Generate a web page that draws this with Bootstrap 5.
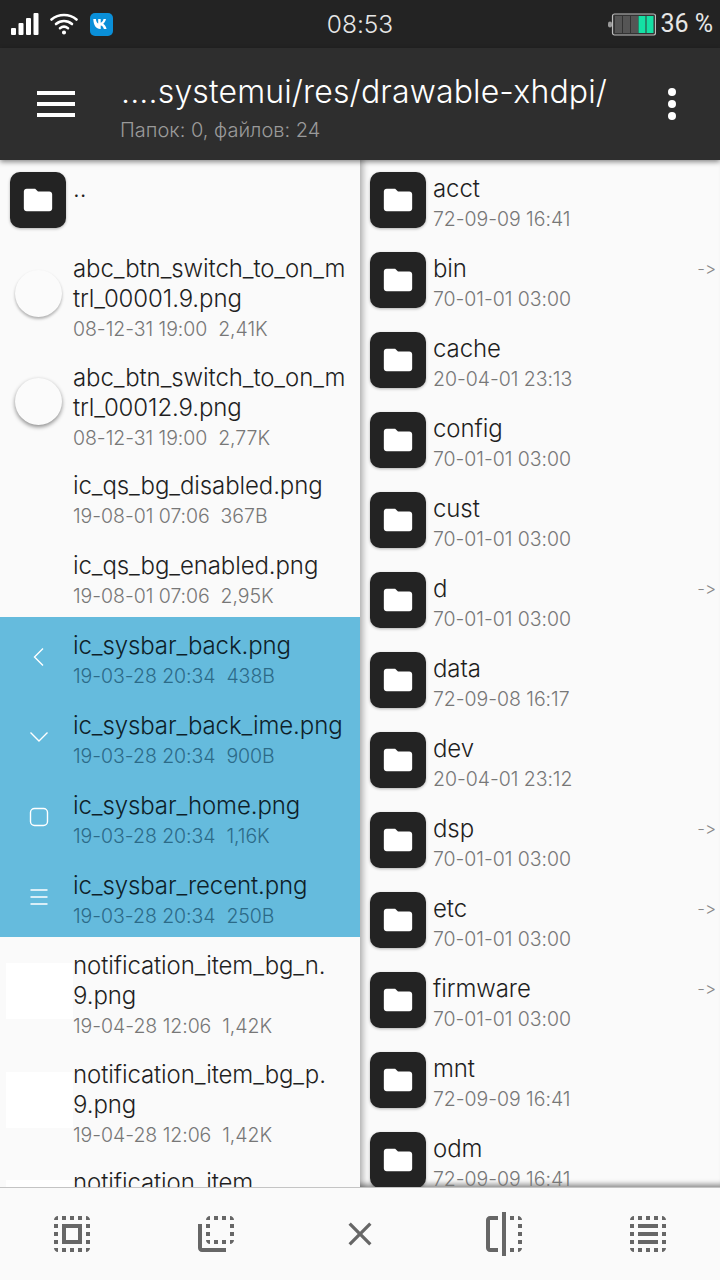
<!DOCTYPE html>
<html lang="ru">
<head>
<meta charset="UTF-8" />
<meta name="viewport" content="width=device-width, initial-scale=1.0" />
<title>Файловый менеджер</title>
<link href="https://cdn.jsdelivr.net/npm/bootstrap@5.3.0/dist/css/bootstrap.min.css" rel="stylesheet" />
<style>
html, body { height: 1280px; overflow: hidden; }
body { font-family: Inter, "Liberation Sans", sans-serif; background: #fafafa; font-variant-ligatures: none; font-feature-settings: "calt" 0, "liga" 0; }
.fm-screen { height: 1280px; }

.fm-status { height: 48px; background: #232323; color: #e6e6e6; padding: 0 7px 0 11px; flex: none; }
.fm-status-side { width: 250px; }
.fm-clock { font-size: 24.5px; line-height: 52px; font-weight: 300; margin-left: -4px; }
.fm-percent { font-family: Roboto, "Liberation Sans", sans-serif; font-size: 25px; line-height: 50px; font-weight: 400; margin-left: 4px; white-space: nowrap; }
.fm-wifi { margin-left: 11px; }
.fm-vk { width: 23px; height: 23px; background: #0a8fd8; border-radius: 5px; margin-left: 12px; }

.fm-head { height: 112px; background: #2e2e2e; color: #fff; flex: none; position: relative; z-index: 2; box-shadow: 0 2px 5px rgba(0,0,0,.45); }
.fm-burger { width: 38px; margin-left: 37px; margin-right: 46px; }
.fm-burger span { display: block; height: 4px; background: #fff; margin-bottom: 7px; }
.fm-burger span:last-child { margin-bottom: 0; }
.fm-title { font-size: 32px; line-height: 40px; font-weight: 300; letter-spacing: .15px; margin-top: 5px; white-space: nowrap; }
.fm-sub { font-size: 20px; line-height: 24px; color: #9a9a9a; font-weight: 300; margin-top: 6px; margin-left: -1px; }
.fm-dots { position: absolute; left: 668px; top: 40px; }
.fm-dots span { display: block; width: 8px; height: 8px; border-radius: 50%; background: #fff; margin-bottom: 4px; }

.fm-panes { min-height: 0; }
.fm-pane { height: 100%; overflow: hidden; background: #fafafa; }
.fm-pane-right { box-shadow: inset 8px 0 6px -5px rgba(0,0,0,.3), inset 0 -7px 5px -4px rgba(0,0,0,.4); }

.list-group-item.fm-row { background: transparent; border: 0; border-radius: 0; padding: 0; color: #1f1f1f; height: 80px; flex: none; display: flex; }
.list-group-item.fm-row.fm-two { height: 108.5px; }
.list-group-item.fm-row.active { background: #65bbdd; color: #0e1f2a; margin: 0; }
.fm-slot { width: 73px; flex: none; display: flex; align-items: center; justify-content: center; }
.fm-text { padding-top: 14px; min-width: 0; }
.fm-name { font-size: 24px; line-height: 30px; font-weight: 300; white-space: nowrap; letter-spacing: -.1px; }
.fm-meta { font-size: 19.5px; line-height: 30px; font-weight: 300; color: #777; white-space: pre; letter-spacing: -.05px; }
.active .fm-meta { color: #2c6a88; }
.fm-link { margin-left: auto; margin-top: 14px; margin-right: 4px; font-size: 17px; line-height: 30px; color: #8a8a8a; font-weight: 300; }

.fm-folder { width: 56px; height: 56px; background: #232323; border-radius: 10px; box-shadow: 0 1px 3px rgba(0,0,0,.3); display: flex; align-items: center; justify-content: center; margin-left: 3px; }
.fm-folder svg { width: 34px; height: 34px; fill: #fff; }
.fm-round { width: 47px; height: 47px; border-radius: 50%; background: #fbfbfb; box-shadow: 0 2px 3px rgba(0,0,0,.3); margin-left: 3px; margin-top: -2px; }
.fm-round-dark { box-shadow: 0 2px 4px rgba(0,0,0,.45); }
.fm-blank { width: 67px; height: 56px; background: #fff; margin-left: 6px; }
.fm-sys { width: 24px; height: 24px; fill: none; stroke: #fff; stroke-width: 1.4; margin-left: 5px; }

.fm-bar { height: 93px; flex: none; background: #fafafa; border-top: 1px solid #c4c4c4; position: relative; z-index: 2; }
.fm-tool { width: 48px; height: 48px; fill: #666; }
</style>
</head>
<body>
<svg width="0" height="0" class="position-absolute">
	<symbol id="i-folder" viewBox="0 0 24 24"><path d="M10 4H4c-1.100 0-2 .9-2 2v12c0 1.100.9 2 2 2h16c1.100 0 2-.9 2-2V8c0-1.100-.9-2-2-2h-8l-2-2z" /></symbol>
</svg>

<div class="fm-screen d-flex flex-column">
	<!-- строка состояния -->
	<div class="fm-status d-flex align-items-center justify-content-between">
		<div class="fm-status-side d-flex align-items-center">
			<svg width="28" height="22" viewBox="0 0 28 22" fill="#fff"><rect x="0" y="15" width="5" height="7" rx="1" /><rect x="7.500" y="10" width="5" height="12" rx="1" /><rect x="15" y="5" width="5" height="17" rx="1" /><rect x="22.500" y="0" width="5" height="22" rx="1" /></svg>
			<svg class="fm-wifi" width="28" height="22" viewBox="0 0 28 22" fill="none" stroke="#fff" stroke-width="2.600" stroke-linecap="round"><path d="M1.500 6.500C8.500 .5 19.500 .5 26.500 6.500" /><path d="M6 11c4.800-4 11.200-4 16 0" /><path d="M10 15.200c2.400-1.800 5.600-1.800 8 0" /><circle cx="14" cy="19.500" r="1.300" fill="#fff" stroke-width="1.500" /></svg>
			<div class="fm-vk d-flex align-items-center justify-content-center">
				<svg width="17" height="10" viewBox="0 0 17 10" fill="#fff"><path d="M.3 0h2.600c.2 2.400 1.200 4 2.300 4.500V0h2.500v3.700C8.900 3.500 10 2 10.500 0H13c-.4 2.200-1.700 3.900-2.800 4.700 1.100.6 2.700 2.200 3.400 5.300h-2.700c-.5-1.800-1.700-3.200-3.200-3.400V10h-.5C3.300 10 .5 6.500.3 0z" /></svg>
			</div>
		</div>
		<div class="fm-clock">08:53</div>
		<div class="fm-status-side d-flex align-items-center justify-content-end">
			<svg width="48" height="23" viewBox="0 0 48 23"><rect x="0" y="8.500" width="4" height="6" rx="2" fill="#999" /><rect x="4.500" y="1" width="43" height="21" rx="2" fill="#333" stroke="#bdbdbd" stroke-width="1.200" /><rect x="7" y="3" width="7" height="17" fill="#555" /><rect x="15" y="3" width="7" height="17" fill="#555" /><rect x="23" y="3" width="7" height="17" fill="#555" /><rect x="30.500" y="3" width="7" height="17" fill="#14e0a4" /><rect x="38.500" y="3" width="7" height="17" fill="#14e0a4" /></svg>
			<div class="fm-percent">36 %</div>
		</div>
	</div>

	<!-- шапка -->
	<header class="fm-head d-flex align-items-center">
		<div class="fm-burger"><span></span><span></span><span></span></div>
		<div>
			<div class="fm-title">....systemui/res/drawable-xhdpi/</div>
			<div class="fm-sub">Папок: 0, файлов: 24</div>
		</div>
		<div class="fm-dots"><span></span><span></span><span></span></div>
	</header>

	<!-- две панели -->
	<div class="fm-panes row g-0 flex-fill flex-nowrap">
		<div class="col-6 h-100">
			<div class="fm-pane list-group list-group-flush flex-nowrap">
				<div class="list-group-item fm-row"><div class="fm-slot"><div class="fm-folder"><svg><use href="#i-folder" /></svg></div></div><div class="fm-text"><div class="fm-name">..</div></div></div>
				<div class="list-group-item fm-row fm-two"><div class="fm-slot"><div class="fm-round"></div></div><div class="fm-text"><div class="fm-name">abc_btn_switch_to_on_m<br />trl_00001.9.png</div><div class="fm-meta">08-12-31 19:00  2,41K</div></div></div>
				<div class="list-group-item fm-row fm-two"><div class="fm-slot"><div class="fm-round fm-round-dark"></div></div><div class="fm-text"><div class="fm-name">abc_btn_switch_to_on_m<br />trl_00012.9.png</div><div class="fm-meta">08-12-31 19:00  2,77K</div></div></div>
				<div class="list-group-item fm-row"><div class="fm-slot"></div><div class="fm-text"><div class="fm-name">ic_qs_bg_disabled.png</div><div class="fm-meta">19-08-01 07:06  367B</div></div></div>
				<div class="list-group-item fm-row"><div class="fm-slot"></div><div class="fm-text"><div class="fm-name">ic_qs_bg_enabled.png</div><div class="fm-meta">19-08-01 07:06  2,95K</div></div></div>
				<div class="list-group-item fm-row active"><div class="fm-slot"><svg class="fm-sys" viewBox="0 0 24 24"><path d="M16 3.500 7.500 12l8.500 8.500" /></svg></div><div class="fm-text"><div class="fm-name">ic_sysbar_back.png</div><div class="fm-meta">19-03-28 20:34  438B</div></div></div>
				<div class="list-group-item fm-row active"><div class="fm-slot"><svg class="fm-sys" viewBox="0 0 24 24"><path d="M3.500 7.500 12 16l8.500-8.500" /></svg></div><div class="fm-text"><div class="fm-name">ic_sysbar_back_ime.png</div><div class="fm-meta">19-03-28 20:34  900B</div></div></div>
				<div class="list-group-item fm-row active"><div class="fm-slot"><svg class="fm-sys" viewBox="0 0 24 24"><rect x="3.500" y="3.500" width="17" height="17" rx="4" /></svg></div><div class="fm-text"><div class="fm-name">ic_sysbar_home.png</div><div class="fm-meta">19-03-28 20:34  1,16K</div></div></div>
				<div class="list-group-item fm-row active"><div class="fm-slot"><svg class="fm-sys" viewBox="0 0 24 24"><path d="M3.500 5h17M3.500 12h17M3.500 19h17" /></svg></div><div class="fm-text"><div class="fm-name">ic_sysbar_recent.png</div><div class="fm-meta">19-03-28 20:34  250B</div></div></div>
				<div class="list-group-item fm-row fm-two"><div class="fm-slot"><div class="fm-blank"></div></div><div class="fm-text"><div class="fm-name">notification_item_bg_n.<br />9.png</div><div class="fm-meta">19-04-28 12:06  1,42K</div></div></div>
				<div class="list-group-item fm-row fm-two"><div class="fm-slot"><div class="fm-blank"></div></div><div class="fm-text"><div class="fm-name">notification_item_bg_p.<br />9.png</div><div class="fm-meta">19-04-28 12:06  1,42K</div></div></div>
				<div class="list-group-item fm-row fm-two"><div class="fm-slot"><div class="fm-blank"></div></div><div class="fm-text"><div class="fm-name">notification_item</div></div></div>
			</div>
		</div>
		<div class="col-6 h-100">
			<div class="fm-pane fm-pane-right list-group list-group-flush flex-nowrap">
				<div class="list-group-item fm-row"><div class="fm-slot"><div class="fm-folder"><svg><use href="#i-folder" /></svg></div></div><div class="fm-text"><div class="fm-name">acct</div><div class="fm-meta">72-09-09 16:41</div></div></div>
				<div class="list-group-item fm-row"><div class="fm-slot"><div class="fm-folder"><svg><use href="#i-folder" /></svg></div></div><div class="fm-text"><div class="fm-name">bin</div><div class="fm-meta">70-01-01 03:00</div></div><div class="fm-link">-&gt;</div></div>
				<div class="list-group-item fm-row"><div class="fm-slot"><div class="fm-folder"><svg><use href="#i-folder" /></svg></div></div><div class="fm-text"><div class="fm-name">cache</div><div class="fm-meta">20-04-01 23:13</div></div></div>
				<div class="list-group-item fm-row"><div class="fm-slot"><div class="fm-folder"><svg><use href="#i-folder" /></svg></div></div><div class="fm-text"><div class="fm-name">config</div><div class="fm-meta">70-01-01 03:00</div></div></div>
				<div class="list-group-item fm-row"><div class="fm-slot"><div class="fm-folder"><svg><use href="#i-folder" /></svg></div></div><div class="fm-text"><div class="fm-name">cust</div><div class="fm-meta">70-01-01 03:00</div></div></div>
				<div class="list-group-item fm-row"><div class="fm-slot"><div class="fm-folder"><svg><use href="#i-folder" /></svg></div></div><div class="fm-text"><div class="fm-name">d</div><div class="fm-meta">70-01-01 03:00</div></div><div class="fm-link">-&gt;</div></div>
				<div class="list-group-item fm-row"><div class="fm-slot"><div class="fm-folder"><svg><use href="#i-folder" /></svg></div></div><div class="fm-text"><div class="fm-name">data</div><div class="fm-meta">72-09-08 16:17</div></div></div>
				<div class="list-group-item fm-row"><div class="fm-slot"><div class="fm-folder"><svg><use href="#i-folder" /></svg></div></div><div class="fm-text"><div class="fm-name">dev</div><div class="fm-meta">20-04-01 23:12</div></div></div>
				<div class="list-group-item fm-row"><div class="fm-slot"><div class="fm-folder"><svg><use href="#i-folder" /></svg></div></div><div class="fm-text"><div class="fm-name">dsp</div><div class="fm-meta">70-01-01 03:00</div></div><div class="fm-link">-&gt;</div></div>
				<div class="list-group-item fm-row"><div class="fm-slot"><div class="fm-folder"><svg><use href="#i-folder" /></svg></div></div><div class="fm-text"><div class="fm-name">etc</div><div class="fm-meta">70-01-01 03:00</div></div><div class="fm-link">-&gt;</div></div>
				<div class="list-group-item fm-row"><div class="fm-slot"><div class="fm-folder"><svg><use href="#i-folder" /></svg></div></div><div class="fm-text"><div class="fm-name">firmware</div><div class="fm-meta">70-01-01 03:00</div></div><div class="fm-link">-&gt;</div></div>
				<div class="list-group-item fm-row"><div class="fm-slot"><div class="fm-folder"><svg><use href="#i-folder" /></svg></div></div><div class="fm-text"><div class="fm-name">mnt</div><div class="fm-meta">72-09-09 16:41</div></div></div>
				<div class="list-group-item fm-row"><div class="fm-slot"><div class="fm-folder"><svg><use href="#i-folder" /></svg></div></div><div class="fm-text"><div class="fm-name">odm</div><div class="fm-meta">72-09-09 16:41</div></div></div>
			</div>
		</div>
	</div>

	<!-- нижняя панель -->
	<div class="fm-bar d-flex align-items-center">
		<div class="flex-fill w-100 text-center"><svg class="fm-tool" viewBox="0 0 24 24"><path d="M3 5h2V3c-1.100 0-2 .9-2 2zm0 8h2v-2H3v2zm4 8h2v-2H7v2zM3 9h2V7H3v2zm10-6h-2v2h2V3zm6 0v2h2c0-1.100-.9-2-2-2zM5 21v-2H3c0 1.100.9 2 2 2zm-2-4h2v-2H3v2zM9 3H7v2h2V3zm2 18h2v-2h-2v2zm8-8h2v-2h-2v2zm0 8c1.100 0 2-.9 2-2h-2v2zm0-12h2V7h-2v2zm0 8h2v-2h-2v2zm-4 4h2v-2h-2v2zm0-16h2V3h-2v2zM7 17h10V7H7v10zm2-8h6v6H9V9z" /></svg></div>
		<div class="flex-fill w-100 text-center"><svg class="fm-tool" viewBox="0 0 24 24"><path d="M9 7H7v2h2V7zm0 4H7v2h2v-2zm0-8c-1.110 0-2 .9-2 2h2V3zm4 12h-2v2h2v-2zm6-12v2h2c0-1.100-.9-2-2-2zm-6 0h-2v2h2V3zM9 17v-2H7c0 1.100.89 2 2 2zm10-4h2v-2h-2v2zm0-4h2V7h-2v2zm0 8c1.100 0 2-.9 2-2h-2v2zM5 7H3v12c0 1.100.89 2 2 2h12v-2H5V7zm10-2h2V3h-2v2zm0 12h2v-2h-2v2z" /></svg></div>
		<div class="flex-fill w-100 text-center"><svg class="fm-tool" viewBox="-2.600 -2.600 29.200 29.200"><path d="M19 6.410 17.590 5 12 10.590 6.410 5 5 6.410 10.590 12 5 17.590 6.410 19 12 13.410 17.590 19 19 17.590 13.410 12z" /></svg></div>
		<div class="flex-fill w-100 text-center"><svg class="fm-tool" viewBox="0 0 24 24"><path d="M15 21h2v-2h-2v2zm4-12h2V7h-2v2zM3 5v14c0 1.100.9 2 2 2h4v-2H5V5h4V3H5c-1.100 0-2 .9-2 2zm16-2v2h2c0-1.100-.9-2-2-2zm-8 20h2V1h-2v22zm8-6h2v-2h-2v2zM15 5h2V3h-2v2zm4 8h2v-2h-2v2zm0 8c1.100 0 2-.9 2-2h-2v2z" /></svg></div>
		<div class="flex-fill w-100 text-center"><svg class="fm-tool" viewBox="0 0 24 24"><path d="M3 5h2V3c-1.100 0-2 .9-2 2zm0 8h2v-2H3v2zm4 8h2v-2H7v2zM3 9h2V7H3v2zm10-6h-2v2h2V3zm6 0v2h2c0-1.100-.9-2-2-2zM5 21v-2H3c0 1.100.9 2 2 2zm-2-4h2v-2H3v2zM9 3H7v2h2V3zm2 18h2v-2h-2v2zm8-8h2v-2h-2v2zm0 8c1.100 0 2-.9 2-2h-2v2zm0-12h2V7h-2v2zm0 8h2v-2h-2v2zm-4 4h2v-2h-2v2zm0-16h2V3h-2v2zM7 9h10V7H7v2zm0 4h10v-2H7v2zm0 4h10v-2H7v2z" /></svg></div>
	</div>
</div>

<script src="https://cdn.jsdelivr.net/npm/bootstrap@5.3.0/dist/js/bootstrap.bundle.min.js"></script>
</body>
</html>
